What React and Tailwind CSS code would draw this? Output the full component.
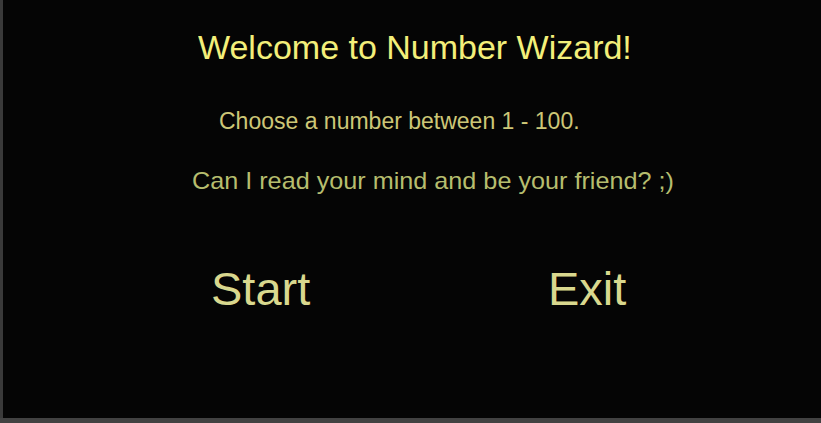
export default function App() {
  return (
    <div className="h-[423px] w-[821px] overflow-hidden bg-[#222]">
      <div className="flex h-[418px] w-full flex-col border-l-[3px] border-[#3a3a3a] bg-[#050505] font-['Liberation_Sans',Arial,sans-serif]">
        <div className="pl-[195px] pt-[31px]">
          <h1 className="inline-block origin-left scale-x-[1.03] text-[33px] leading-none text-[#f3ef7a]">
            Welcome to Number Wizard!
          </h1>
        </div>
        <p className="mt-[44px] pl-[216px] text-[23px] leading-none text-[#cdc777]">
          Choose a number between 1 - 100.
        </p>
        <div className="mt-[36px] pl-[189px]">
          <p className="inline-block origin-left scale-x-[1.05] text-[24px] leading-none text-[#b6bd6e]">
            Can I read your mind and be your friend? ;)
          </p>
        </div>
        <div className="mt-[69px] flex pl-[208px] text-[47px] leading-none text-[#d9d88e]">
          <button className="w-[337px] text-left">Start</button>
          <button className="text-left">Exit</button>
        </div>
      </div>
      <div className="h-[5px] w-full bg-[#424242]" />
    </div>
  );
}
